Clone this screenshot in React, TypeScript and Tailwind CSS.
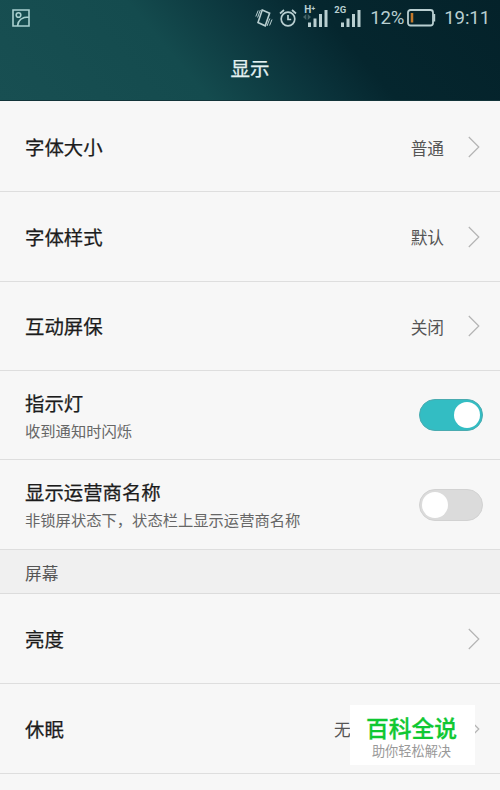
import type { ReactNode } from "react";

const base = "pl-[25px] flex items-center justify-between border-b border-[#dedede]";

function Chevron() {
  return (
    <svg width="12" height="22" viewBox="0 0 12 22" fill="none" stroke="#b4b4b4" strokeWidth="1.2">
      <path d="M0.8 1L10.8 11L0.8 21" />
    </svg>
  );
}

function Toggle({ on = false }: { on?: boolean }) {
  return (
    <span
      className={`flex w-16 h-8 items-center rounded-full border px-[2px] ${
        on ? "justify-end bg-[#33bdc3] border-[#4aabb0]" : "justify-start bg-[#dbdbdb] border-[#d2d2d2]"
      }`}
    >
      <span className="size-[26px] rounded-full bg-white" />
    </span>
  );
}

function Title({ children }: { children: ReactNode }) {
  return <span className="text-[19.4px] leading-7 text-[#1c1c1c] [-webkit-text-stroke:0.25px_#1c1c1c]">{children}</span>;
}

function LinkRow({ title, value, height = "h-[90px]" }: { title: string; value?: ReactNode; height?: string }) {
  return (
    <div className={`${base} ${height} pr-5`}>
      <Title>{title}</Title>
      <div className="flex items-center gap-[24px]">
        <span className="pt-px text-[16.7px] leading-6 text-[#555]">{value}</span>
        <Chevron />
      </div>
    </div>
  );
}

function ToggleRow({ title, note, on, height }: { title: string; note: string; on?: boolean; height: string }) {
  return (
    <div className={`${base} ${height} pr-[17px]`}>
      <div className="flex flex-col pt-[2px]">
        <Title>{title}</Title>
        <span className="text-[15.3px] leading-[27px] text-[#666]">{note}</span>
      </div>
      <Toggle on={on} />
    </div>
  );
}

function Signal() {
  return (
    <svg width="20" height="18" viewBox="0 0 20 18" fill="#b9cfd1">
      <path d="M0 13.500h3V18H0zM5.500 9.500h3V18h-3zM11 5h3v13h-3zM16.500 1h3v17h-3z" />
    </svg>
  );
}

function StatusBar() {
  return (
    <div className="flex h-[35px] items-center pl-3 pr-[10px] text-[#b9cfd1]">
      <svg width="18" height="18" viewBox="0 0 18 18" fill="none" stroke="#a9d0cf" strokeWidth="1.6">
        <path d="M1 1h16v16H1zM5.500 17C6 11 10 8 17 8" />
        <circle cx="6.500" cy="6" r="2.300" />
      </svg>
      <div className="ml-auto flex items-center">
        <svg width="18" height="20" viewBox="0 0 18 20" fill="none" stroke="currentColor">
          <path d="M7.200 2L14.600 5.200L10.200 17.800L3 14.600Z" strokeWidth="1.6" />
          <path d="M3.200 2.500L0.800 8.500M5.400 2L2.600 9.500M14.800 10.500L12 18M17 11.500L14.600 17.500" strokeWidth="1" />
        </svg>
        <svg className="ml-[6px]" width="18" height="18" viewBox="0 0 18 18" fill="none" stroke="currentColor" strokeWidth="1.7">
          <circle cx="9" cy="10" r="6.800" />
          <path d="M9 6v4.500h3.200M1 4.500L5 1M17 4.500L13 1" />
        </svg>
        <div className="relative ml-[11px] h-[18px] w-5">
          <Signal />
          <span className="absolute -left-[4px] -top-[5px] font-['Roboto'] text-[10px] font-bold leading-[12px]">H⁺</span>
          <svg className="absolute -left-[5px] top-[5px]" width="8" height="6" viewBox="0 0 8 6" fill="#456468">
            <path d="M0 3L3.300 0V6zM8 3L4.700 0V6z" />
          </svg>
        </div>
        <div className="relative ml-[13px] h-[18px] w-5">
          <Signal />
          <span className="absolute -left-[7px] -top-[5px] font-['Roboto'] text-[9.500px] font-bold leading-[12px]">2G</span>
        </div>
        <span className="ml-[9px] font-['Roboto'] text-[18.600px] tracking-[-0.2px] leading-6">12%</span>
        <svg className="ml-[3px]" width="29" height="18" viewBox="0 0 29 18" fill="none" stroke="currentColor" strokeWidth="1.8">
          <rect x="1" y="1" width="25" height="15.500" rx="2.500" />
          <path d="M27.300 5v7.500" />
          <path d="M5 4v9.500" stroke="#c47a2c" strokeWidth="2.500" />
        </svg>
        <span className="ml-[8px] font-['Roboto'] text-[18.600px] tracking-[-0.100px] leading-6">19:11</span>
      </div>
    </div>
  );
}

export default function App() {
  return (
    <div className="relative h-[790px] w-[500px] overflow-hidden bg-[#f7f7f7] font-['Noto_Sans_CJK_SC',sans-serif]">
      <header className="h-[101px] border-b border-[#12343a] bg-[linear-gradient(50deg,#184f52_0%,#144b4e_36%,#0a323a_57%,#05262e_68%,#04222a_100%)]">
        <StatusBar />
        <h1 className="pt-[19px] text-center text-[19.5px] leading-7 text-[#e4f1f1] [-webkit-text-stroke:0.25px_#e4f1f1]">显示</h1>
      </header>

      <LinkRow title="字体大小" value="普通" height="h-[91px] pt-[2px]" />
      <LinkRow title="字体样式" value="默认" />
      <LinkRow title="互动屏保" value="关闭" height="h-[89px]" />
      <ToggleRow title="指示灯" note="收到通知时闪烁" height="h-[89px]" on />
      <ToggleRow title="显示运营商名称" note="非锁屏状态下，状态栏上显示运营商名称" height="h-[90px]" />

      <div className="flex h-11 items-center border-b border-[#dcdcdc] bg-[#f0f0f0] px-[25px] pt-[2px] text-[16.7px] leading-6 text-[#555]">
        屏幕
      </div>

      <LinkRow title="亮度" />
      <LinkRow title="休眠" value={<span className="block w-[110px]">无</span>} />

      {/* Badge over the last row */}
      <div className="absolute left-[350px] top-[705px] flex h-[60px] w-[125px] flex-col items-center bg-white pr-[2px] pt-[8px]">
        <span className="text-[22.800px] font-medium leading-[30px] text-[#0fc832] [-webkit-text-stroke:0.3px_#0fc832]">百科全说</span>
        <span className="text-[13.2px] leading-4 text-[#999]">助你轻松解决</span>
      </div>
    </div>
  );
}
